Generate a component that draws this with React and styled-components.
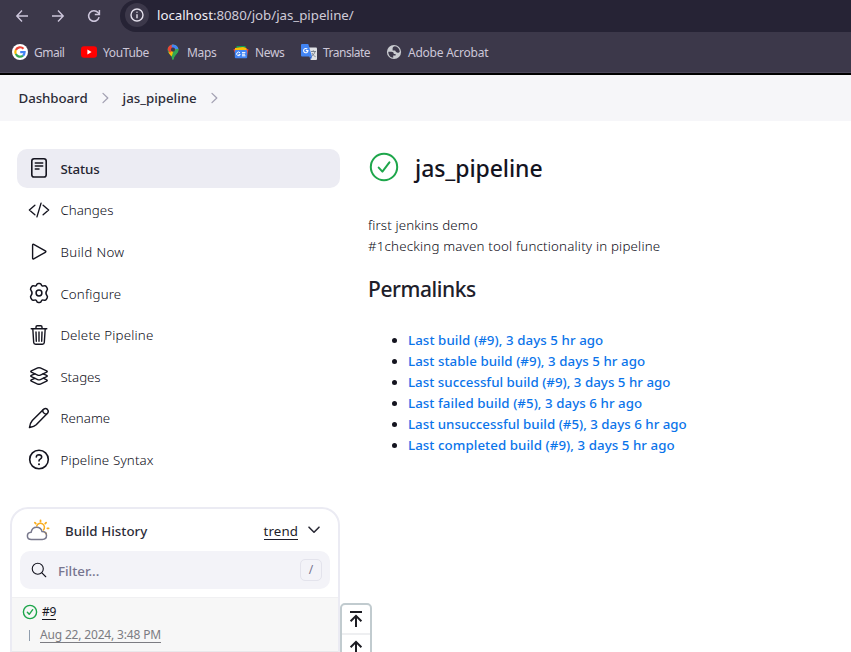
import React from 'react';
import styled, { createGlobalStyle } from 'styled-components';
import { IoCodeSlashOutline, IoLayersOutline, IoSearchOutline } from 'react-icons/io5';

const GlobalStyle = createGlobalStyle`
  *, *::before, *::after { box-sizing: border-box; }
  html, body { margin: 0; padding: 0; overflow: hidden; background: #fff; }
  body { font-family: "Noto Sans", "Open Sans", sans-serif; color: #14141f; }
`;

const Page = styled.div`
  width: 851px;
  height: 652px;
  overflow: hidden;
  display: flex;
  flex-direction: column;
`;

/* Browser chrome */
const Toolbar = styled.header`
  flex: none;
  height: 32px;
  display: flex;
  align-items: center;
  background: #3c384a;
  color: #cdc6dc;
`;
const NavButtons = styled.div`
  width: 120px;
  height: 30px;
  padding-left: 14px;
  display: flex;
  gap: 20px;
  align-items: center;
  svg { display: block; }
`;
const AddressBar = styled.div`
  flex: 1;
  height: 32px;
  padding-left: 5px;
  display: flex;
  align-items: center;
  gap: 8px;
  border-radius: 16px 0 0 16px;
  background: #262335;
`;
const SiteInfo = styled.span`
  width: 24px;
  height: 24px;
  margin-top: -2px;
  display: grid;
  place-items: center;
  border-radius: 50%;
  background: #3c384a;
`;
const Url = styled.span`
  margin-top: -2px;
  font-size: 13.3px;
  letter-spacing: -0.03px;
  color: #cfcbd8;
  b { font-weight: 400; color: #f1eff6; }
`;
const Bookmarks = styled.nav`
  flex: none;
  height: 43px;
  display: flex;
  padding: 0 0 1px 12px;
  align-items: center;
  background: #3c384a;
  border-bottom: 2px solid #000;
  box-shadow: inset 0 -1px #4d485c;
`;
const Bookmark = styled.a`
  display: flex;
  align-items: center;
  width: ${p => p.$width}px;
  font-size: 12px;
  letter-spacing: ${p => p.$spacing}px;
  color: #cdc7d8;
  white-space: nowrap;
  svg { flex: none; margin-right: ${p => p.$gap}px; }
`;

/* Jenkins page */
const Breadcrumbs = styled.nav`
  flex: none;
  height: 46px;
  padding-left: 18.5px;
  display: flex;
  align-items: center;
  background: #f6f6f9;
  font-size: 13.3px;
  font-weight: 500;
  color: #2c2c38;
  svg { margin: 0 13px; }
`;
const Crumb = styled.span`letter-spacing: ${p => p.$spacing}px;`;
const Body = styled.div`
  flex: 1;
  display: flex;
  min-height: 0;
`;
const Sidebar = styled.aside`
  width: 340px;
  padding: 28px 0 0 10px;
  flex: none;
`;
const Tasks = styled.div`
  padding-left: 7px;
  display: grid;
  row-gap: 3px;
`;
const Task = styled.a`
  height: 38.6px;
  padding-left: 11px;
  display: flex;
  align-items: center;
  gap: 10.4px;
  border-radius: 10px;
  background: ${p => (p.$active ? '#ececf3' : 'transparent')};
  font-size: 13.3px;
  font-weight: ${p => (p.$active ? 500 : 300)};
  letter-spacing: ${p => p.$spacing}px;
  color: ${p => (p.$active ? '#242430' : '#0c0c16')};
  svg { width: 22px; height: 22px; flex: none; color: #14141f; }
  span { padding-top: 1px; }
`;
const HistoryCard = styled.section`
  width: 330px;
  height: 170px;
  margin-top: 28px;
  border: 2px solid #ebebf3;
  border-radius: 18px;
  overflow: hidden;
`;
const HistoryHeader = styled.div`
  height: 42px;
  padding: 2px 17px 0 14px;
  display: flex;
  align-items: center;
  font-size: 13.3px;
  font-weight: 500;
  color: #2c2c38;
  svg { display: block; }
`;
const HistoryTitle = styled.span`
  flex: 1;
  margin-left: 15px;
  letter-spacing: 0.04px;
`;
const Trend = styled.a`
  margin: 1px 9px 0 0;
  font-weight: 400;
  letter-spacing: 0.1px;
  line-height: 16px;
  color: #1d1d29;
  border-bottom: 1px solid #1d1d29;
`;
const Filter = styled.div`
  height: 38px;
  margin: 0 8px 8px;
  padding: 0 8px 0 9.5px;
  display: flex;
  align-items: center;
  border-radius: 10px;
  background: #f3f3f8;
  font-size: 13.3px;
  font-weight: 500;
  color: #77758f;
  span { flex: 1; margin-left: 10.5px; padding-top: 2px; }
`;
const Key = styled.kbd`
  width: 22px;
  height: 22px;
  display: grid;
  place-items: center;
  border: 1px solid #e3e3ec;
  border-radius: 5px;
  font: 400 12px "Noto Sans", sans-serif;
`;
const Build = styled.div`
  height: 55px;
  padding: 5px 0 0 10px;
  background: #f7f7f7;
  border-top: 1px solid #f0f0f2;
  border-bottom: 1px solid #e9e9ec;
`;
const BuildRow = styled.div`
  height: 18px;
  display: flex;
  align-items: center;
  gap: 4px;
  font-size: 12px;
`;
const BuildNumber = styled.a`
  padding-top: 1px;
  line-height: 14px;
  letter-spacing: -0.2px;
  border-bottom: 1px solid #14141f;
`;
const BuildDate = styled(BuildRow)`
  height: 17px;
  margin-top: 6px;
  padding-left: 7px;
  gap: 10px;
  color: #7c7c82;
  a { line-height: 14px; letter-spacing: -0.17px; border-bottom: 1px solid #7c7c82; }
`;
const Tick = styled.i`width: 1px; height: 11px; background: #8f9dad;`;

/* Floats above the page at its lower edge */
const ScrollButtons = styled.div`
  position: absolute;
  left: 340px;
  top: 603px;
  width: 32px;
  height: 62px;
  border: 2px solid #c1cbcf;
  border-radius: 5px;
  background: #fff;
`;
const ScrollButton = styled.button`
  display: block;
  width: 28px;
  height: ${p => p.$height}px;
  padding: 0 0 ${p => p.$bottom}px 6px;
  border: 0;
  border-bottom: 2px solid #eeeff1;
  background: none;
  svg { display: block; }
`;

const Main = styled.main`
  flex: 1;
  padding: 29px 0 0 28px;
`;
const TitleRow = styled.div`
  height: 34px;
  display: flex;
  align-items: center;
  gap: 15px;
`;
const Title = styled.h1`
  margin: 2px 0 0;
  font-size: 23px;
  font-weight: 500;
  line-height: 34px;
  letter-spacing: -0.08px;
`;
const Description = styled.div`
  margin-top: 31px;
  font-size: 13.3px;
  font-weight: 300;
  line-height: 21px;
  color: #0c0c16;
`;
const Line = styled.div`letter-spacing: ${p => p.$spacing}px;`;
const Heading = styled.h2`
  margin: 16px 0 0;
  font-size: 21px;
  font-weight: 500;
  line-height: 32px;
  letter-spacing: -0.42px;
  color: #20202a;
`;
const Links = styled.ul`
  margin: 25px 0 0;
  padding-left: 40px;
  font-size: 13.3px;
  line-height: 21px;
`;
const LinkItem = styled.li`
  a { font-weight: 500; letter-spacing: ${p => p.$spacing}px; color: #0b74ea; }
`;

const Stroke = ({ children, ...rest }) => (
  <svg fill="none" stroke="currentColor" strokeLinecap="round" strokeLinejoin="round" {...rest}>{children}</svg>
);

const BackIcon = () => <Stroke width="16" height="16" viewBox="0 0 16 16" strokeWidth="1.4" strokeLinecap="butt" strokeLinejoin="miter"><path d="M14 8H3M8 2.6L2.8 8 8 13.4" /></Stroke>;
const ForwardIcon = () => <Stroke width="16" height="16" viewBox="0 0 16 16" strokeWidth="1.4" strokeLinecap="butt" strokeLinejoin="miter"><path d="M2 8h11M8 2.6L13.2 8 8 13.4" /></Stroke>;
const ReloadIcon = () => <Stroke width="16" height="16" viewBox="0 0 16 16" strokeWidth="1.5" strokeLinecap="butt" strokeLinejoin="miter"><path d="M13.1 9.2A5.3 5.3 0 1 1 12 4.6L13.2 6" /><path d="M13.4 2v4.6H8.8" /></Stroke>;
const InfoIcon = () => <Stroke width="14" height="14" viewBox="0 0 14 14" strokeWidth="1.4" stroke="#e4e0ec"><circle cx="7" cy="7" r="6" /><path d="M7 6.7v3M7 4.2v.1" /></Stroke>;
const CrumbArrow = () => <Stroke width="9" height="12" viewBox="0 0 9 12" stroke="#a3a1b3" strokeWidth="1.3"><path d="M2 1.4L6.8 6 2 10.6" /></Stroke>;

const GoogleIcon = () => (
  <svg width="16" height="16" viewBox="0 0 16 16">
    <circle cx="8" cy="8" r="8" fill="#fff" />
    <g fill="none" strokeWidth="2.2">
      <path d="M11.5 4.8A4.7 4.7 0 0 0 3.8 5.9" stroke="#ea4335" />
      <path d="M3.8 5.9a4.7 4.7 0 0 0 0 4.2" stroke="#fbbc05" />
      <path d="M3.8 10.1a4.7 4.7 0 0 0 7.2 1.5" stroke="#34a853" />
      <path d="M11 11.6a4.7 4.7 0 0 0 1.6-3.4H8.2" stroke="#4285f4" />
    </g>
  </svg>
);
const YouTubeIcon = () => (
  <svg width="16" height="16" viewBox="0 0 16 16"><rect y="2.3" width="16" height="11.4" rx="3" fill="#f00" /><path d="M6.4 5.6L10.6 8l-4.2 2.4z" fill="#fff" /></svg>
);
const MapsIcon = () => (
  <svg width="12" height="16" viewBox="0 0 12 16">
    <clipPath id="pin"><path d="M6 .4A5.4 5.4 0 0 0 .6 5.8C.6 9.9 4.7 10.8 5.2 15c.2 1 1.4 1 1.6 0 .5-4.2 4.6-5.1 4.6-9.2A5.4 5.4 0 0 0 6 .4z" /></clipPath>
    <g clipPath="url(#pin)">
      <path d="M0 0h12v16H0z" fill="#34a853" />
      <path d="M0 10.2L8 1l4 4-9.5 9z" fill="#fbbc04" />
      <path d="M6 8l6-7v7l-6 8H4z" fill="#34a853" />
      <path d="M0 0h6L8 3 3 9 0 5z" fill="#ea4335" />
      <path d="M5 0h7v5H8L4.5 3z" fill="#4285f4" />
    </g>
    <circle cx="6" cy="5.7" r="2.1" fill="#3c384a" />
  </svg>
);
const NewsIcon = () => (
  <svg width="16" height="16" viewBox="0 0 16 16">
    <path d="M3.5 2h9v5h-9z" fill="#0f9d58" />
    <path d="M.3 5.3L7 3.4l2 7-6 1z" fill="#ea4335" />
    <path d="M8 3.8l7.5 1.4-1.5 7H7z" fill="#ea4335" />
    <path d="M2 3.9l8-.8 3.5.9v4H2z" fill="#fbbc04" />
    <rect x="1.8" y="6" width="12.4" height="8.3" rx="1" fill="#4285f4" />
    <path d="M7 8.9a1.8 1.8 0 1 0 .2 1.5H5.6M9 8.6h3.4M9 10.2h3M9 11.8h3.400" fill="none" stroke="#fff" strokeWidth="1" />
  </svg>
);
const TranslateIcon = () => (
  <svg width="16" height="16" viewBox="0 0 16 16">
    <path d="M6 3.6h9a1 1 0 0 1 1 1V15a1 1 0 0 1-1 1H9.6z" fill="#dfe1e5" />
    <path d="M10 7.5h5M12.3 6.3v1.2M14 7.6c-.5 2-2 4-3.7 4.9M11 9c.6 1.5 2 3 3.6 3.7" fill="none" stroke="#727b86" strokeWidth=".9" />
    <path d="M1 0h6.3L11 12.4H1a1 1 0 0 1-1-1V1a1 1 0 0 1 1-1z" fill="#4285f4" />
    <path d="M8.6 12.4H11L9.7 16z" fill="#2462cf" />
    <path d="M6.3 5A2.2 2.2 0 1 0 7 6.6H4.8" fill="none" stroke="#fff" strokeWidth="1.05" />
  </svg>
);
const GlobeIcon = () => (
  <svg width="16" height="16" viewBox="0 0 16 16">
    <circle cx="8" cy="8" r="7.1" fill="#c9cbd0" />
    <path d="M2.3 7.8h3.1c1.6 0 2.4.8 2.4 2.2h1.8v1.5H7.2v2.3C4.3 13.6 2.2 11.2 2.3 7.8zM6.6 4.6c0-1.3.8-2 2.4-2.3 2.6.4 4.6 2.5 4.8 5.2-.5 1.5-2.6 1.7-3.7.6-.7-.7-.3-1.7-1.3-1.7H6.6z" fill="#3c384a" />
  </svg>
);

const StatusIcon = () => <Stroke viewBox="0 0 22 22" strokeWidth="1.6"><rect x="3.8" y="1.8" width="14.4" height="18.2" rx="2.3" /><path d="M7.3 6h7.4M7.3 9h7.4M7.3 12h3.7" strokeWidth="1.5" /></Stroke>;
const PlayIcon = () => <Stroke viewBox="0 0 22 22" strokeWidth="1.4"><path d="M4.600 5v13.200q0 1.200 1.100.6l11.600-6.500q1.200-.7 0-1.400L5.700 4.400q-1.100-.6-1.100.6z" /></Stroke>;
const GearIcon = () => (
  <Stroke viewBox="0 0 22 22" strokeWidth="1.5">
    <circle cx="11" cy="11" r="2.9" />
    <path d="M8.7 2.8Q9 1.4 10.3 1.4h1.4Q13 1.4 13.3 2.8q.5 1.7 2.3 1.1 1.900-.7 2.700.7l.9 1.600q.7 1.200-.3 2.200-1.900 2.600 0 5.200 1 1 .3 2.200l-.9 1.600q-.8 1.400-2.700.7-1.800-.6-2.300 1.100-.3 1.400-1.600 1.400h-1.400q-1.300 0-1.600-1.400-.5-1.700-2.300-1.100-1.900.7-2.700-.7l-.9-1.600q-.7-1.200.3-2.200 1.900-2.600 0-5.200-1-1-.3-2.200l.9-1.600q.8-1.400 2.700-.7 1.800.6 2.300-1.100z" />
  </Stroke>
);
const TrashIcon = () => <Stroke viewBox="0 0 22 22" strokeWidth="1.4"><path d="M3.2 4.8h15.6M4.8 4.8l.9 13.7q.1 1.8 1.9 1.8h6.8q1.8 0 1.9-1.8l.9-13.7M8 4.6V3q0-1.200 1.200-1.200h3.600Q14 1.800 14 3v1.600M11 8v9.200M8 8l.3 9.200M14 8l-.3 9.200" /></Stroke>;
const RenameIcon = () => <Stroke viewBox="0 0 22 22" strokeWidth="1.5"><path d="M14.6 3.2l1.2-1.1q1.9-1.3 3.6.3 1.6 1.7.3 3.6l-1.2 1.2L8.2 17.7Q6.4 19.4 1.5 20.5 2.3 15.6 4.3 13.5z" /><path d="M14.6 3.2q.2 3.3 3.9 4" /></Stroke>;
const HelpIcon = () => <Stroke viewBox="0 0 22 22" strokeWidth="1.6"><circle cx="11" cy="11.500" r="9.300" /><path d="M8.300 9q.2-2.200 2.700-2.200 2.600.1 2.700 2.200 0 1.300-1.500 2.100-1.200.7-1.200 1.900" /><path d="M11 16.200v.1" strokeWidth="2" /></Stroke>;
const CheckIcon = ({ size, weight }) => <Stroke width={size} height={size} viewBox="0 0 32 32" stroke="#1ea64b" strokeWidth={weight}><circle cx="16" cy="16" r="13.2" /><path d="M10.7 16.6l3.7 4 7-9.2" /></Stroke>;
const WeatherIcon = () => (
  <Stroke width="24" height="24" viewBox="0 0 24 24" strokeWidth="1.5">
    <path d="M10.7 6.9a4 4 0 1 1 6.7 4.1" stroke="#f9ad20" />
    <path d="M14.5 2.6V1.4M9.8 4.6l-.9-.9M19.2 4.6l.9-.9M21.4 9.3h1.2M19.3 13.7l.8.8" stroke="#f9ad20" strokeWidth="1.8" />
    <path d="M5.4 20.4c-2.5 0-4-1.6-4-3.5 0-2 1.6-3.4 3.7-3.6C5.7 10 8 8.3 10.7 8.3c2.6 0 4.7 1.7 5.3 4.3 2.7.1 4.5 1.6 4.5 3.9 0 2.4-1.8 3.9-4.2 3.9z" stroke="#78788c" />
  </Stroke>
);
const ChevronIcon = () => <Stroke width="14" height="14" viewBox="0 0 14 14" strokeWidth="1.6"><path d="M2 3.2l5 5 5-5" /></Stroke>;
const TopIcon = () => <Stroke width="16" height="18" viewBox="0 0 16 18" strokeWidth="2" stroke="#1d1d23" strokeLinecap="butt" strokeLinejoin="miter"><path d="M2 2h12M8 17V6M2.600 11.200L8 5.800l5.400 5.400" /></Stroke>;
const UpIcon = () => <Stroke width="16" height="18" viewBox="0 0 16 18" strokeWidth="2" stroke="#1d1d23" strokeLinecap="butt" strokeLinejoin="miter"><path d="M8 14V3M2.600 8.200L8 2.800l5.400 5.400" /></Stroke>;

const bookmarks = [
  ['Gmail', GoogleIcon, 69, -0.52, 6],
  ['YouTube', YouTubeIcon, 86, -0.37, 6],
  ['Maps', MapsIcon, 66, -0.32, 8],
  ['News', NewsIcon, 68, -0.35, 6],
  ['Translate', TranslateIcon, 85, -0.5, 6],
  ['Adobe Acrobat', GlobeIcon, 120, -0.24, 6],
];
const tasks = [
  ['Status', StatusIcon, -0.12],
  ['Changes', IoCodeSlashOutline, 0.03],
  ['Build Now', PlayIcon, 0.34],
  ['Configure', GearIcon, 0.17],
  ['Delete Pipeline', TrashIcon, 0.19],
  ['Stages', IoLayersOutline, -0.05],
  ['Rename', RenameIcon, 0.04],
  ['Pipeline Syntax', HelpIcon, 0.16],
];
const permalinks = [
  ['Last build (#9), 3 days 5 hr ago', 0.07],
  ['Last stable build (#9), 3 days 5 hr ago', 0.05],
  ['Last successful build (#9), 3 days 5 hr ago', 0.02],
  ['Last failed build (#5), 3 days 6 hr ago', 0.06],
  ['Last unsuccessful build (#5), 3 days 6 hr ago', 0.01],
  ['Last completed build (#9), 3 days 5 hr ago', 0.06],
];

export default function App() {
  return (
    <Page>
      <GlobalStyle />
      <Toolbar>
        <NavButtons><BackIcon /><ForwardIcon /><ReloadIcon /></NavButtons>
        <AddressBar>
          <SiteInfo><InfoIcon /></SiteInfo>
          <Url><b>localhost</b>:8080/job/jas_pipeline/</Url>
        </AddressBar>
      </Toolbar>
      <Bookmarks>
        {bookmarks.map(([label, Icon, width, spacing, gap]) => (
          <Bookmark key={label} $width={width} $spacing={spacing} $gap={gap}><Icon />{label}</Bookmark>
        ))}
      </Bookmarks>
      <Breadcrumbs>
        <Crumb $spacing={-0.07}>Dashboard</Crumb><CrumbArrow />
        <Crumb $spacing={-0.02}>jas_pipeline</Crumb><CrumbArrow />
      </Breadcrumbs>
      <Body>
        <Sidebar>
          <Tasks>
            {tasks.map(([label, Icon, spacing], i) => (
              <Task key={label} $active={i === 0} $spacing={spacing}><Icon /><span>{label}</span></Task>
            ))}
          </Tasks>
          <HistoryCard>
            <HistoryHeader>
              <WeatherIcon />
              <HistoryTitle>Build History</HistoryTitle>
              <Trend>trend</Trend>
              <ChevronIcon />
            </HistoryHeader>
            <Filter>
              <IoSearchOutline size={18} color="#14141f" />
              <span>Filter...</span>
              <Key>/</Key>
            </Filter>
            <Build>
              <BuildRow><CheckIcon size={16} weight={2.8} /><BuildNumber>#9</BuildNumber></BuildRow>
              <BuildDate><Tick /><a>Aug 22, 2024, 3:48 PM</a></BuildDate>
            </Build>
          </HistoryCard>
        </Sidebar>
        <Main>
          <TitleRow><CheckIcon size={32} weight={2} /><Title>jas_pipeline</Title></TitleRow>
          <Description>
            <Line $spacing={0.14}>first jenkins demo</Line>
            <Line $spacing={0.19}>#1checking maven tool functionality in pipeline</Line>
          </Description>
          <Heading>Permalinks</Heading>
          <Links>
            {permalinks.map(([text, spacing]) => <LinkItem key={text} $spacing={spacing}><a>{text}</a></LinkItem>)}
          </Links>
        </Main>
      </Body>
      <ScrollButtons>
        <ScrollButton $height={30} $bottom={0}><TopIcon /></ScrollButton>
        <ScrollButton $height={28} $bottom={0}><UpIcon /></ScrollButton>
      </ScrollButtons>
    </Page>
  );
}
